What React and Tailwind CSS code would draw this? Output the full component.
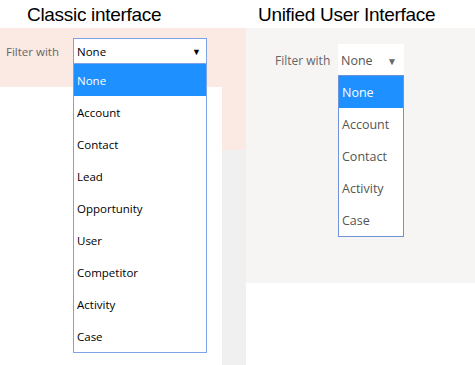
const classicItems = ['Account', 'Contact', 'Lead', 'Opportunity', 'User', 'Competitor', 'Activity', 'Case']
const unifiedItems = ['Account', 'Contact', 'Activity', 'Case']

export default function App() {
  return (
    <div className="flex w-[475px] h-[365px] overflow-hidden bg-white font-['Open_Sans',sans-serif]">
      {/* Classic */}
      <div className="flex flex-col w-[246px] h-full">
        <div className="h-[28px] pl-[27px] text-[19px] leading-[29px] text-black font-['Liberation_Sans',sans-serif] tracking-[-0.3px]">
          Classic interface
        </div>
        <div className="relative h-[59px] bg-[#fbe9e3] pt-[10px] flex items-start">
          <span className="pl-[6px] w-[73px] text-[11.5px] leading-[27px] text-[#666]">Filter with</span>
          <div className="relative">
            <div className="flex items-center justify-between w-[134px] h-[26px] pt-[2px] bg-white border border-[#7ea2e6] pl-[3px] pr-[5px] text-[11.5px] text-black">
              <span>None</span>
              <span className="text-[9px]">▼</span>
            </div>
            <ul className="absolute left-0 top-[25px] z-10 w-[134px] bg-white border border-[#7ea2e6] text-[11.5px] text-black">
              <li className="h-[32px] leading-[34px] pl-[3px] bg-[#1e90ff] text-white">None</li>
              {classicItems.map((item) => (
                <li key={item} className="h-[32px] leading-[34px] pl-[3px]">
                  {item}
                </li>
              ))}
            </ul>
          </div>
        </div>
        <div className="flex flex-1">
          <div className="w-[222px] bg-white" />
          <div className="flex flex-col flex-1">
            <div className="h-[63px] bg-[#fbe9e3]" />
            <div className="flex-1 bg-[#f0f0f0]" />
          </div>
        </div>
      </div>

      {/* Unified */}
      <div className="flex flex-col flex-1 h-full">
        <div className="h-[28px] pl-[12px] text-[19px] leading-[29px] text-black font-['Liberation_Sans',sans-serif] tracking-[-0.3px]">
          Unified User Interface
        </div>
        <div className="h-[255px] bg-[#f7f5f3] pt-[16px] flex items-start">
          <span className="pl-[29px] w-[92px] text-[12px] leading-[33px] text-[#666]">Filter with</span>
          <div className="relative">
            <div className="flex items-center justify-between w-[66px] h-[31px] pt-[3px] bg-white pl-[3px] pr-[7px] text-[12.5px] text-[#555]">
              <span>None</span>
              <span className="text-[10px] text-[#666]">▼</span>
            </div>
            <ul className="absolute left-0 top-[31px] z-10 w-[66px] bg-white border border-[#6f92da] text-[12.5px] text-[#555]">
              <li className="h-[32px] leading-[34px] pl-[3px] bg-[#1e90ff] text-white">None</li>
              {unifiedItems.map((item) => (
                <li key={item} className="h-[32px] leading-[34px] pl-[3px]">
                  {item}
                </li>
              ))}
            </ul>
          </div>
        </div>
        <div className="flex-1 bg-white" />
      </div>
    </div>
  )
}
